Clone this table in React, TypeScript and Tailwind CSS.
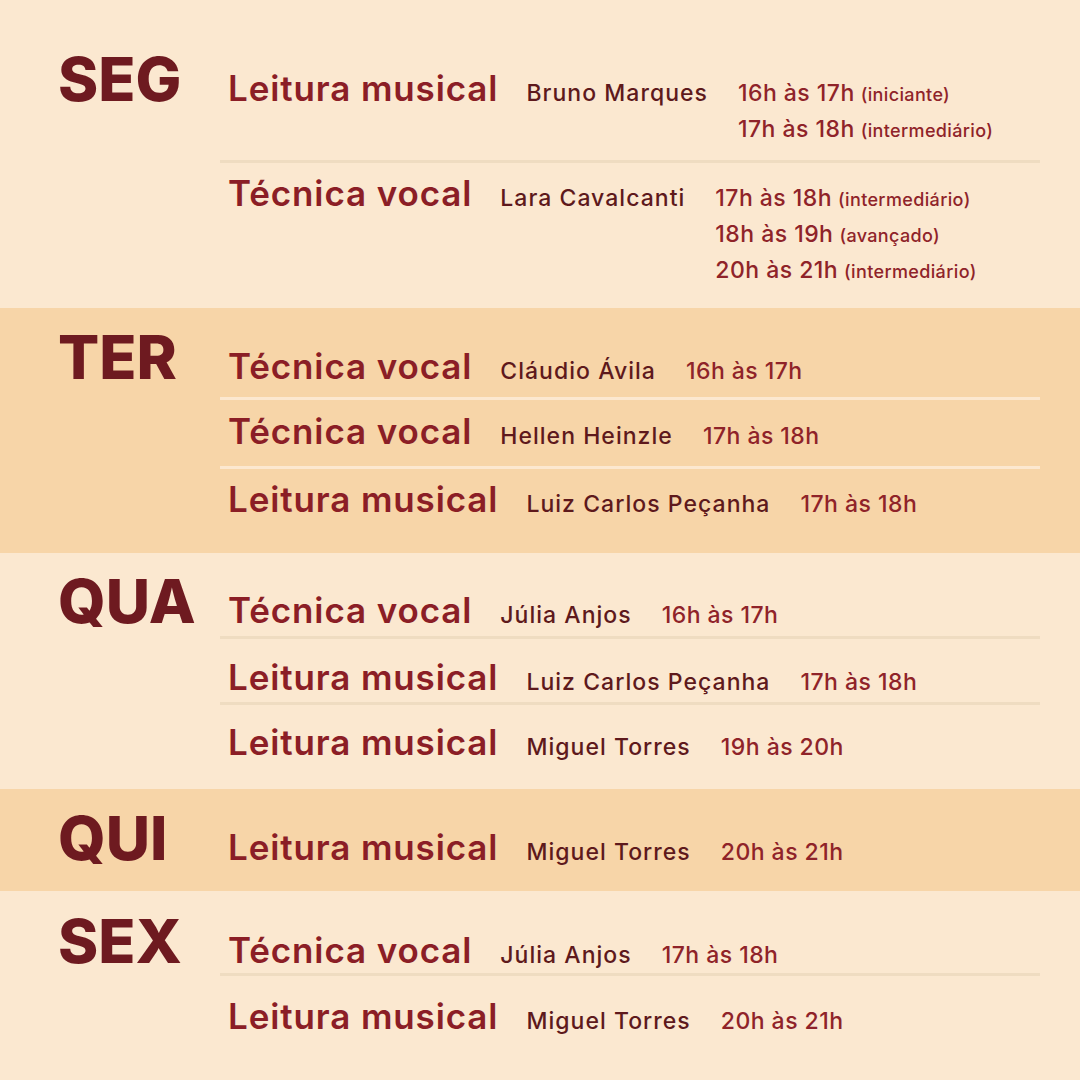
import type { ReactNode } from "react";

type Slot = { time: string; level?: string };

type Lesson = {
  title: string;
  teacher: string;
  slots: Slot[];
  className?: string;
};

type Day = {
  label: string;
  dark?: boolean;
  className: string;
  lessons: Lesson[];
};

const days: Day[] = [
  {
    label: "SEG",
    className: "h-[308px] pt-[49px]",
    lessons: [
      {
        title: "Leitura musical",
        teacher: "Bruno Marques",
        slots: [
          { time: "16h às 17h", level: "(iniciante)" },
          { time: "17h às 18h", level: "(intermediário)" },
        ],
        className: "pb-[12px] border-b-[3px] border-[#efdcc1]",
      },
      {
        title: "Técnica vocal",
        teacher: "Lara Cavalcanti",
        slots: [
          { time: "17h às 18h", level: "(intermediário)" },
          { time: "18h às 19h", level: "(avançado)" },
          { time: "20h às 21h", level: "(intermediário)" },
        ],
        className: "pt-[8px]",
      },
    ],
  },
  {
    label: "TER",
    dark: true,
    className: "h-[245px] pt-[19px]",
    lessons: [
      {
        title: "Técnica vocal",
        teacher: "Cláudio Ávila",
        slots: [{ time: "16h às 17h" }],
        className: "pb-[8px] border-b-[3px] border-[#fce8d0]",
      },
      {
        title: "Técnica vocal",
        teacher: "Hellen Heinzle",
        slots: [{ time: "17h às 18h" }],
        className: "pt-[9px] pb-[12px] border-b-[3px] border-[#fce8d0]",
      },
      {
        title: "Leitura musical",
        teacher: "Luiz Carlos Peçanha",
        slots: [{ time: "17h às 18h" }],
        className: "pt-[8px]",
      },
    ],
  },
  {
    label: "QUA",
    className: "h-[236px] pt-[18px]",
    lessons: [
      {
        title: "Técnica vocal",
        teacher: "Júlia Anjos",
        slots: [{ time: "16h às 17h" }],
        className: "pb-[3px] border-b-[3px] border-[#efdcc1]",
      },
      {
        title: "Leitura musical",
        teacher: "Luiz Carlos Peçanha",
        slots: [{ time: "17h às 18h" }],
        className: "pt-[16px] pb-[2px] border-b-[3px] border-[#efdcc1]",
      },
      {
        title: "Leitura musical",
        teacher: "Miguel Torres",
        slots: [{ time: "19h às 20h" }],
        className: "pt-[15px]",
      },
    ],
  },
  {
    label: "QUI",
    dark: true,
    className: "h-[102px] pt-[19px]",
    lessons: [
      {
        title: "Leitura musical",
        teacher: "Miguel Torres",
        slots: [{ time: "20h às 21h" }],
      },
    ],
  },
  {
    label: "SEX",
    className: "h-[189px] pt-[20px]",
    lessons: [
      {
        title: "Técnica vocal",
        teacher: "Júlia Anjos",
        slots: [{ time: "17h às 18h" }],
        className: "border-b-[3px] border-[#efdcc1]",
      },
      {
        title: "Leitura musical",
        teacher: "Miguel Torres",
        slots: [{ time: "20h às 21h" }],
        className: "pt-[18px]",
      },
    ],
  },
];

function LessonRow({ lesson }: { lesson: Lesson }) {
  return (
    <div className={`flex items-baseline px-2 ${lesson.className ?? ""}`}>
      <span className="text-[35px] font-semibold leading-[44px] tracking-[0.025em] text-[#8b1e26]">
        {lesson.title}
      </span>
      <span className="ml-[28px] text-[23px] font-medium leading-[35px] tracking-[0.045em] text-[#5e191c]">
        {lesson.teacher}
      </span>
      <div className="ml-[30px] flex flex-col">
        {lesson.slots.map((s, i) => (
          <div
            key={i}
            className="text-[23px] font-medium leading-[35px] tracking-[0.02em] text-[#8f2329]"
          >
            {s.time}
            {s.level && (
              <span className="ml-[6px] text-[18px] tracking-[0.02em]">
                {s.level}
              </span>
            )}
          </div>
        ))}
      </div>
    </div>
  );
}

function DaySection({ day }: { day: Day }): ReactNode {
  return (
    <section
      className={`flex items-baseline pl-[58px] ${day.className} ${
        day.dark ? "bg-[#f7d5a8]" : "bg-[#fbe8d0]"
      }`}
    >
      <div className="w-[162px] shrink-0 text-[61px] font-extrabold leading-none text-[#6e1a20]">
        {day.label}
      </div>
      <div className="w-[820px]">
        {day.lessons.map((l, i) => (
          <LessonRow key={i} lesson={l} />
        ))}
      </div>
    </section>
  );
}

export default function App() {
  return (
    <div
      className="h-[1080px] w-[1080px] overflow-hidden bg-[#fbe8d0]"
      style={{ fontFamily: "Inter, 'Noto Sans', sans-serif" }}
    >
      {days.map((d) => (
        <DaySection key={d.label} day={d} />
      ))}
    </div>
  );
}
